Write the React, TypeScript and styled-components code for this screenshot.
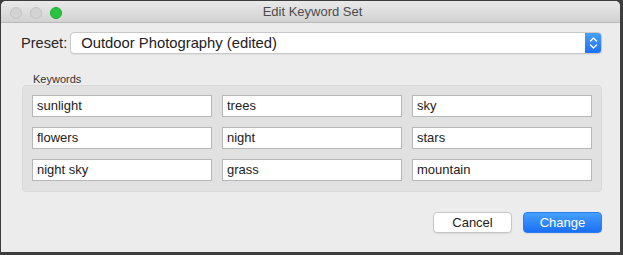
import { ReactElement } from "react";
import styled, { createGlobalStyle } from "styled-components";

const keywords = [
  "sunlight",
  "trees",
  "sky",
  "flowers",
  "night",
  "stars",
  "night sky",
  "grass",
  "mountain",
];

const GlobalStyle = createGlobalStyle`
  html, body {
    margin: 0;
    padding: 0;
    background: #3d3d3d;
  }
  body {
    width: 623px;
    height: 255px;
    overflow: hidden;
    font-family: "Liberation Sans", Arial, sans-serif;
  }
  #root {
    padding: 1px 0 0 1px;
  }
`;

export default function App(): ReactElement {
  return (
    <>
      <GlobalStyle />
      <Window>
        <TitleBar>
          <Lights>
            <Light />
            <Light />
            <Light $active />
          </Lights>
          <Title>Edit Keyword Set</Title>
        </TitleBar>
        <Body>
          <PresetRow>
            <Label>Preset:</Label>
            <Select>
              <SelectText>Outdoor Photography (edited)</SelectText>
              <Stepper>
                <svg width="9" height="14" viewBox="0 0 9 14">
                  <path
                    d="M1.5 5 L4.5 2 L7.5 5 M1.5 9 L4.5 12 L7.5 9"
                    fill="none"
                    stroke="#fff"
                    strokeWidth="1.4"
                    strokeLinecap="round"
                    strokeLinejoin="round"
                  />
                </svg>
              </Stepper>
            </Select>
          </PresetRow>
          <GroupLabel>Keywords</GroupLabel>
          <Group>
            {keywords.map((k) => (
              <Field key={k}>{k}</Field>
            ))}
          </Group>
          <Buttons>
            <Button>Cancel</Button>
            <Button $primary>Change</Button>
          </Buttons>
        </Body>
      </Window>
    </>
  );
}

const Window = styled.div`
  width: 619px;
  height: 251px;
  background: #ececec;
  border-radius: 5px 5px 0 0;
  overflow: hidden;
  display: flex;
  flex-direction: column;
`;

const TitleBar = styled.div`
  position: relative;
  height: 21px;
  flex-shrink: 0;
  background: linear-gradient(#e9e9e9, #d2d2d2);
  border-bottom: 1px solid #b9b9b9;
  display: flex;
  align-items: center;
  justify-content: center;
`;

const Lights = styled.div`
  position: absolute;
  left: 9px;
  top: 6px;
  display: flex;
  gap: 8px;
`;

const Light = styled.div<{ $active?: boolean }>`
  width: 12px;
  height: 12px;
  box-sizing: border-box;
  border-radius: 50%;
  background: ${(p) => (p.$active ? "#29c53f" : "#d3d3d3")};
  border: 1px solid ${(p) => (p.$active ? "#1fa834" : "#c3c3c3")};
`;

const Title = styled.div`
  font-size: 13px;
  color: #4c4c4c;
  padding-left: 4px;
`;

const Body = styled.div`
  padding: 9px 18px 0 20px;
  display: flex;
  flex-direction: column;
`;

const PresetRow = styled.div`
  display: flex;
  align-items: center;
  gap: 3px;
  height: 22px;
`;

const Label = styled.span`
  font-size: 14.6px;
  color: #262626;
`;

const Select = styled.div`
  flex: 1;
  height: 22px;
  box-sizing: border-box;
  background: #fff;
  border: 1px solid #c9c9c9;
  border-radius: 4px;
  display: flex;
  align-items: center;
  overflow: hidden;
  box-shadow: 0 1px 1px rgba(0, 0, 0, 0.06);
`;

const SelectText = styled.span`
  flex: 1;
  font-size: 14.8px;
  color: #222;
  padding-left: 10px;
`;

const Stepper = styled.div`
  width: 17px;
  height: 22px;
  margin: -1px -1px -1px 0;
  background: linear-gradient(#4aa2fd, #1a6ff6);
  border-radius: 0 4px 4px 0;
  display: flex;
  align-items: center;
  justify-content: center;
`;

const GroupLabel = styled.div`
  font-size: 11px;
  line-height: 12px;
  color: #333;
  margin: 19px 0 0 12px;
  height: 12px;
`;

const Group = styled.div`
  margin: 0 0 0 1px;
  width: 580px;
  box-sizing: border-box;
  background: #e1e1e1;
  border: 1px solid #d9d9d9;
  border-radius: 4px;
  padding: 9px 9px 10px;
  display: grid;
  grid-template-columns: repeat(3, 180px);
  grid-auto-rows: 22px;
  gap: 10px;
`;

const Field = styled.div`
  box-sizing: border-box;
  background: #fff;
  border: 1px solid #b7b7b7;
  font-size: 13px;
  color: #222;
  padding: 0 0 0 4px;
  line-height: 20px;
`;

const Buttons = styled.div`
  display: flex;
  justify-content: flex-end;
  gap: 11px;
  margin-top: 20px;
`;

const Button = styled.div<{ $primary?: boolean }>`
  width: 79px;
  height: 21px;
  box-sizing: border-box;
  border-radius: 4px;
  font-size: 13px;
  display: flex;
  align-items: center;
  justify-content: center;
  color: ${(p) => (p.$primary ? "#fff" : "#222")};
  background: ${(p) =>
    p.$primary ? "linear-gradient(#45a0fd, #1b6ff6)" : "#fff"};
  border: 1px solid ${(p) => (p.$primary ? "#2a7cf5" : "#c6c6c6")};
  box-shadow: 0 1px 1px rgba(0, 0, 0, 0.08);
`;
